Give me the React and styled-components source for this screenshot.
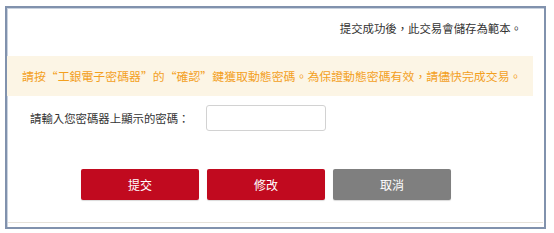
import React from "react";
import styled, { createGlobalStyle } from "styled-components";

const Global = createGlobalStyle`
  html, body { margin: 0; padding: 0; background: #ffffff; }
  body { font-family: "Noto Sans CJK TC", "Noto Sans", sans-serif; }
  * { box-sizing: border-box; }
`;

const Frame = styled.div`
  margin: 6px 0 0 5px;
  width: 541px;
  height: 223px;
  border: 2px solid #8192ad;
  box-shadow: inset 1px 1px 0 #c9d2df;
  display: flex;
  flex-direction: column;
  background: #fff;
`;

const Note = styled.div`
  padding: 12px 22px 0 0;
  text-align: right;
  font-size: 11.4px;
  line-height: 16px;
  color: #333;
`;

const Banner = styled.div`
  margin-top: 20px;
  width: 526px;
  height: 40px;
  padding-left: 15px;
  background: #fcf5e5;
  color: #f3a01e;
  font-size: 11.9px;
  line-height: 40px;
  white-space: nowrap;
`;

const FormRow = styled.div`
  margin-top: 9px;
  padding-left: 23px;
  display: flex;
  align-items: center;
  height: 26px;
`;

const Label = styled.label`
  width: 176px;
  font-size: 11.4px;
  color: #333;
`;

const Input = styled.input`
  width: 120px;
  height: 26px;
  border: 1px solid #d2d2d2;
  border-radius: 3px;
  outline: none;
  padding: 0 6px;
`;

const Actions = styled.div`
  margin-top: 38px;
  padding-left: 74px;
  display: flex;
  gap: 8px;
`;

const Button = styled.button`
  width: 118px;
  height: 31px;
  border: none;
  border-radius: 2px;
  background: ${(p) => (p.$variant === "gray" ? "#7f7f7f" : "#c10a1f")};
  color: #fff;
  font-family: inherit;
  font-size: 12px;
  box-shadow: 0 1px 1px rgba(0, 0, 0, 0.15);
  cursor: pointer;
`;

const BottomLine = styled.div`
  margin: 22px 1px 0;
  height: 1px;
  background: #e6e2da;
`;

export default function App() {
  return (
    <>
      <Global />
      <Frame>
        <Note>提交成功後，此交易會儲存為範本。</Note>
        <Banner>
          請按“工銀電子密碼器”的“確認”鍵獲取動態密碼。為保證動態密碼有效，請儘快完成交易。
        </Banner>
        <FormRow>
          <Label>請輸入您密碼器上顯示的密碼：</Label>
          <Input type="text" />
        </FormRow>
        <Actions>
          <Button>提交</Button>
          <Button>修改</Button>
          <Button $variant="gray">取消</Button>
        </Actions>
        <BottomLine />
      </Frame>
    </>
  );
}
